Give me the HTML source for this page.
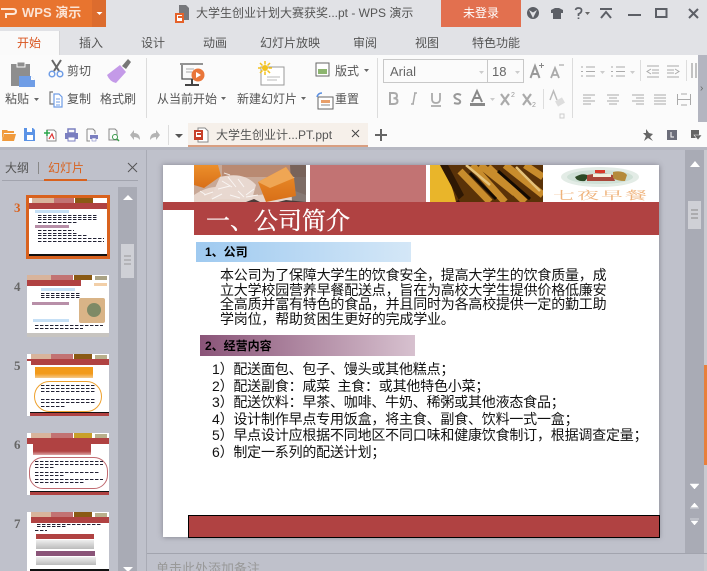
<!DOCTYPE html>
<html><head><meta charset="utf-8">
<style>
html,body{margin:0;padding:0}
html{width:707px;height:571px;overflow:hidden}
body{width:707px;height:571px;overflow:hidden;position:relative;background:#bfc1cb;font-family:"Liberation Sans","Noto Sans CJK SC",sans-serif;color:#555}
.a{position:absolute}
.t{position:absolute;white-space:nowrap;font-size:12px;line-height:16px;color:#555}
svg{position:absolute;overflow:visible}
.s{font-family:"Liberation Sans","WenQuanYi Zen Hei","Noto Sans CJK SC",sans-serif;color:#111;white-space:nowrap;position:absolute;font-size:14px;line-height:15px}
.th{position:absolute;left:27px;width:82px;height:62px;background:#fff;overflow:hidden}
.th div{position:absolute}
.n{position:absolute;left:14px;font:bold 13px "Liberation Serif",serif;color:#666}
.b{height:1px;background:repeating-linear-gradient(90deg,#223 0 3px,#99a 3px 4px,#fff 4px 5px)}
</style></head><body>
<!-- top -->
<div class="a" style="left:0;top:0;width:707px;height:55px;background:#e1e2e6"></div>
<div class="a" style="left:0;top:0;width:92px;height:27px;background:#e8742f"></div>
<div class="a" style="left:92px;top:0;width:14px;height:27px;background:#dc6c2e"></div>
<svg style="left:0;top:0" width="106" height="27"><path d="M1 9H13Q16 9 16 11.500Q16 14 13 14H6V18" fill="none" stroke="#fde8da" stroke-width="2"/><path d="M96.500 12h6l-3 3z" fill="#fff"/></svg>
<div class="t" style="left:22px;top:5px;color:#fbe3d4;font-size:13px;font-weight:bold">WPS 演示</div>
<svg style="left:175px;top:5px" width="16" height="18"><path d="M4 0h7l3 3v12H4z" fill="#77787c"/><rect x="0" y="8" width="9" height="10" fill="#e5622a"/><rect x="2" y="10" width="5" height="6" fill="#fff"/><rect x="3" y="11" width="4" height="2" fill="#e5622a"/></svg>
<div class="t" style="left:196px;top:5px;font-size:12px;color:#555;line-height:17px">大学生创业计划大赛获奖...pt - WPS 演示</div>
<div class="a" style="left:441px;top:0;width:80px;height:27px;background:#e2704f"></div>
<div class="t" style="left:463px;top:5px;color:#fff">未登录</div>
<svg style="left:0;top:0" width="707" height="27">
<circle cx="533" cy="13" r="6" fill="#5c5f66"/><path d="M529 10l4 2.500 4-2.500-4 8z" fill="#e1e2e6"/>
<path d="M551 10l4-2h4l4 2v3h-2v6h-8v-6h-2z" fill="#5c5f66"/>
<path d="M575.500 10Q576 8 578.500 8Q582 8 581.500 11Q581 13 578.500 14V16M578.500 17.500v1.500" fill="none" stroke="#5c5f66" stroke-width="1.700"/><path d="M585 12h5l-2.500 3z" fill="#666"/>
<path d="M600 9h12M601 18l5-6 5 6" fill="none" stroke="#5c5f66" stroke-width="2"/>
<rect x="628" y="14" width="13" height="2" fill="#5c5f66"/>
<rect x="656" y="9" width="10.500" height="8" fill="none" stroke="#5c5f66" stroke-width="2"/>
<path d="M689 9l9 9M698 9l-9 9" stroke="#5c5f66" stroke-width="2"/></svg>
<!-- tabs -->
<div class="a" style="left:0;top:31px;width:60px;height:24px;background:#fafafa;border-right:1px solid #d6d6d8;box-sizing:border-box"></div>
<div class="t" style="left:17px;top:35px;color:#d9541e">开始</div>
<div class="t" style="left:79px;top:35px">插入</div>
<div class="t" style="left:141px;top:35px">设计</div>
<div class="t" style="left:203px;top:35px">动画</div>
<div class="t" style="left:260px;top:35px">幻灯片放映</div>
<div class="t" style="left:353px;top:35px">审阅</div>
<div class="t" style="left:415px;top:35px">视图</div>
<div class="t" style="left:472px;top:35px">特色功能</div>
<!-- ribbon -->
<div class="a" style="left:0;top:55px;width:707px;height:92px;background:#fbfbfb"></div>
<div class="a" style="left:698px;top:55px;width:9px;height:67px;background:#b3b5c0"></div>
<div class="t" style="left:700px;top:81px;font-size:10px;color:#666">›</div>
<div class="a" style="left:146px;top:58px;width:1px;height:60px;background:#dcdcdc"></div>
<div class="a" style="left:377px;top:58px;width:1px;height:60px;background:#dcdcdc"></div>
<div class="a" style="left:572px;top:58px;width:1px;height:60px;background:#dcdcdc"></div>
<svg style="left:0;top:55px" width="180" height="67">
<rect x="11" y="9" width="19" height="22" fill="#8e8e8e"/><rect x="17" y="7" width="8" height="5" fill="#8e8e8e" stroke="#fbfbfb"/><path d="M19 21h12l4 4v7H19z" fill="#6f9de6"/><path d="M31 21v4h4z" fill="#fff"/>
<path d="M52 5l7 11M61 5l-7 11" stroke="#666" stroke-width="2"/><circle cx="52" cy="19" r="2.800" fill="none" stroke="#6f9de6" stroke-width="1.500"/><circle cx="60" cy="19" r="2.800" fill="none" stroke="#6f9de6" stroke-width="1.500"/>
<path d="M122 11l6-7 3 3-5 7z" fill="#777"/><path d="M107 20l13-10 6 7-10 11q-6-1-9-8z" fill="#c49ae8"/>
<path d="M53 37h-3v12h4" fill="none" stroke="#777" stroke-width="1.200"/><path d="M54 39h5l3 3v10h-8z" fill="#fff" stroke="#6f9de6" stroke-width="1.200"/><path d="M56 44h4M56 47h4M56 50h4" stroke="#6f9de6"/>
<path d="M34 43h5l-2.500 3z" fill="#666"/></svg>
<div class="t" style="left:67px;top:63px">剪切</div>
<div class="t" style="left:5px;top:91px">粘贴</div>
<div class="t" style="left:67px;top:91px">复制</div>
<div class="t" style="left:100px;top:91px">格式刷</div>
<svg style="left:175px;top:55px" width="200" height="67">
<path d="M5 9h23M7 10v14h19" fill="none" stroke="#555" stroke-width="1.300"/><path d="M11 14h8M11 17h6" stroke="#aaa"/><path d="M17 24v5M10 30h14" stroke="#444" stroke-width="2"/><circle cx="23" cy="20" r="6.500" fill="#e9763a"/><path d="M21 17l5 3-5 3z" fill="#fff"/>
<path d="M86 12h23v18H86z" fill="#fff" stroke="#999"/><path d="M92 22h13M92 25h10" stroke="#bbb"/>
<circle cx="90" cy="13" r="3" fill="#f3c21e"/><path d="M90 6v3.500M90 16.500v3.500M83 13h3.500M93.500 13h3.500M85 8l2.500 2.500M92.500 15.500l2.500 2.500M95 8l-2.500 2.500M87.500 15.500l-2.500 2.500" stroke="#f3c21e" stroke-width="1.500"/>
<rect x="141" y="8" width="13" height="13" fill="#fff" stroke="#666"/><rect x="143" y="14" width="9" height="5" fill="#8cb56f"/>
<path d="M143 42h15v12h-15z" fill="#fff" stroke="#666"/><rect x="146" y="45" width="9" height="3" fill="#e9a06a"/><path d="M146 50h9" stroke="#888"/><path d="M147 38q-4 0-5 4" fill="none" stroke="#5b8fe0" stroke-width="1.500"/>
</svg>
<div class="t" style="left:157px;top:91px">从当前开始</div><svg style="left:221px;top:97px" width="6" height="4"><path d="M0 0h5l-2.500 3z" fill="#666"/></svg>
<div class="t" style="left:237px;top:91px">新建幻灯片</div><svg style="left:301px;top:97px" width="6" height="4"><path d="M0 0h5l-2.500 3z" fill="#666"/></svg>
<div class="t" style="left:335px;top:63px">版式</div><svg style="left:364px;top:69px" width="6" height="4"><path d="M0 0h5l-2.500 3z" fill="#666"/></svg>
<div class="t" style="left:335px;top:91px">重置</div>
<!-- font -->
<div class="a" style="left:383px;top:59px;width:141px;height:24px;border:1px solid #c8c8c8;box-sizing:border-box"></div>
<div class="a" style="left:487px;top:59px;width:1px;height:24px;background:#c8c8c8"></div>
<div class="t" style="left:390px;top:64px;color:#666;font-size:13px">Arial</div>
<div class="t" style="left:492px;top:64px;color:#666;font-size:13px">18</div>
<svg style="left:0;top:0" width="707" height="122">
<path d="M479 71h5l-2.500 3zM515 71h5l-2.500 3z" fill="#ccc"/>
<path d="M530.500 78l4.500-12 4.500 12M532.500 74h5" fill="none" stroke="#999" stroke-width="2"/><path d="M539 65.500h5M541.500 63v5" stroke="#888"/>
<path d="M551 78l4-10 4 10M552.500 75h5" fill="none" stroke="#aaa" stroke-width="1.800"/><path d="M559 65h5" stroke="#999"/>
<g fill="none" stroke="#aaa">
<path d="M586 67h9M586 71.500h9M586 76h9M581 67h2M581 71.500h2M581 76h2"/>
<path d="M616 67h9M616 71.500h9M616 76h9M611 67h2M611 71.500h2M611 76h2"/>
<path d="M647 66h12M652 70h7M652 73h7M647 77h12M651 69l-4 2.500 4 2.500"/>
<path d="M667 66h12M667 70h7M667 73h7M667 77h12M675 69l4 2.500-4 2.500"/>
<path d="M583 95h12M583 98h8M583 101h12M583 104h8"/>
<path d="M607 95h12M609 98h8M607 101h12M609 104h8"/>
<path d="M632 95h12M636 98h8M632 101h12M636 104h8"/>
<path d="M654 95h12M654 98h12M654 101h12M654 104h12"/>
<path d="M677.500 94v11M690.500 94v11M678 99.500h12M681 94h6M681 105h6"/>
</g>
<path d="M600 71h5l-2.500 3zM630 71h5l-2.500 3zM490 98h5l-2.500 3z" fill="#ccc"/>
<path d="M692 63v15M696 63v15" stroke="#888"/>
<rect x="640" y="60" width="1" height="21" fill="#ddd"/><rect x="686" y="60" width="1" height="21" fill="#ddd"/><rect x="543" y="89" width="1" height="20" fill="#ddd"/>
<path d="M390 104V93h3.500q3.500 0 3.500 2.700t-3.500 2.500q4 0 4 2.900t-4 2.900z" fill="none" stroke="#aaa" stroke-width="2"/>
<path d="M414 93h3M411 104h3M415 93l-2 11" stroke="#aaa" stroke-width="1.500"/>
<path d="M432 93v6q0 4 4 4t4-4v-6M431 106h10" fill="none" stroke="#aaa" stroke-width="1.800"/>
<path d="M461 95q-4-2-6 0t2 4q4 1.500 3 3.500t-6 0.500" fill="none" stroke="#999" stroke-width="2"/>
<path d="M472 102l5-11 5 11M474 98h6" fill="none" stroke="#888" stroke-width="2"/><rect x="470" y="103" width="15" height="3" fill="#888"/>
<path d="M501 94l8 11M509 94l-8 11" stroke="#aaa" stroke-width="2.200"/><text x="511" y="97" font-size="7" font-family="Liberation Sans" fill="#999">2</text>
<path d="M523 94l8 11M531 94l-8 11" stroke="#aaa" stroke-width="2.200"/><text x="532" y="107" font-size="7" font-family="Liberation Sans" fill="#999">2</text>
<path d="M550 100l3.500-9 3.500 9" fill="none" stroke="#bbb" stroke-width="1.500"/><rect x="556" y="99" width="8" height="6" transform="rotate(-30 560 102)" fill="#ddd"/>
<rect x="560" y="114" width="4" height="4" fill="none" stroke="#ccc"/></svg>
<!-- quickbar -->
<svg style="left:0;top:122px" width="190" height="25">
<path d="M2 8h5l1 1h6v2H4l-2 7zM4 12h12l-2 7H2z" fill="#f09a3c"/>
<path d="M24 6h9l2 2v11H24z" fill="#5b93e6"/><rect x="27" y="6" width="5" height="4" fill="#fff"/><rect x="27" y="13" width="6" height="5" fill="#fff"/>
<path d="M47 8h7l2 2v9H47z" fill="#fff" stroke="#888"/><path d="M44 11h6M47 8v6" stroke="#2aa54a" stroke-width="1.500"/><path d="M49 17l3-5 2 5" fill="none" stroke="#d33" stroke-width="1.200"/>
<rect x="65" y="11" width="13" height="6" fill="#7b7fc0"/><rect x="68" y="7" width="7" height="4" fill="none" stroke="#7b7fc0" stroke-width="1.500"/><rect x="68" y="15" width="7" height="4" fill="#fff" stroke="#7b7fc0"/>
<path d="M87 7h6l2 2v3M87 7v12h3" fill="none" stroke="#888"/><rect x="90" y="13" width="8" height="4" fill="#7b7fc0"/><rect x="92" y="16" width="4" height="3" fill="#fff" stroke="#7b7fc0" stroke-width=".6"/>
<path d="M109 7h6l2 2v9h-8z" fill="none" stroke="#888"/><circle cx="115" cy="15" r="2.500" fill="#fff" stroke="#3a9a4a"/><path d="M117 17l2 2" stroke="#3a9a4a" stroke-width="1.500"/>
<path d="M130 13l4-5v3q6 0 6 7q-2-3-6-3v3z" fill="#b3b3b3"/><path d="M160 13l-4-5v3q-6 0-6 7q2-3 6-3v3z" fill="#b3b3b3"/>
<rect x="168" y="3" width="1" height="20" fill="#ddd"/><path d="M175 12h8l-4 4z" fill="#555"/></svg>
<div class="a" style="left:188px;top:123px;width:180px;height:24px;background:#f6f0ea;border-bottom:2px solid #d99f81;box-sizing:border-box"></div>
<svg style="left:194px;top:127px" width="16" height="16"><path d="M4 1h7l3 3v11H4z" fill="#fff" stroke="#888"/><rect x="0" y="3" width="9" height="10" fill="#c8402a"/><rect x="2" y="5" width="5" height="5" fill="#fff"/><rect x="3" y="6" width="4" height="2" fill="#c8402a"/></svg>
<div class="t" style="left:216px;top:127px;font-size:12px;line-height:17px">大学生创业计...PT.ppt</div>
<svg style="left:352px;top:130px" width="8" height="8"><path d="M0 0l7 7M7 0l-7 7" stroke="#444"/></svg>
<svg style="left:375px;top:129px" width="12" height="12"><path d="M6 0v12M0 6h12" stroke="#666" stroke-width="2"/></svg>
<svg style="left:640px;top:126px" width="62" height="18"><path d="M6 3l3 4 4 1-3 3 3 4-5-3-4 3 2-5-3-3h3z" fill="#666"/><rect x="27" y="4" width="10" height="10" fill="#6c6e7a"/><path d="M31 6v5h3" stroke="#fff" fill="none"/><rect x="51" y="4" width="8" height="8" fill="#666"/><path d="M54 9h8l-4 5z" fill="#666" stroke="#fbfbfb" stroke-width=".6"/></svg>
<div class="a" style="left:0;top:147px;width:707px;height:3px;background:#b6b8c2"></div>
<!-- left panel -->
<div class="a" style="left:146px;top:150px;width:1px;height:421px;background:#a9abb5"></div>
<div class="t" style="left:5px;top:160px;color:#555">大纲</div>
<div class="a" style="left:38px;top:162px;width:1px;height:12px;background:#888"></div>
<div class="t" style="left:48px;top:160px;color:#d9621e">幻灯片</div>
<svg style="left:128px;top:163px" width="10" height="10"><path d="M0 0l9 9M9 0l-9 9" stroke="#555"/></svg>
<div class="a" style="left:2px;top:180px;width:136px;height:1px;background:#a2a4ae"></div>
<div class="a" style="left:44px;top:179px;width:43px;height:2px;background:#d9621e"></div>
<div class="a" style="left:118px;top:187px;width:19px;height:384px;background:#a9abb5"></div>
<svg style="left:122px;top:194px" width="12" height="8"><path d="M1 6h10L6 1z" fill="#fff"/></svg>
<div class="a" style="left:121px;top:244px;width:13px;height:34px;background:#cfd0d6"></div>
<svg style="left:124px;top:255px" width="7" height="12"><path d="M0 1h7M0 5h7M0 9h7" stroke="#999"/></svg>
<svg style="left:122px;top:567px" width="12" height="4"><path d="M1 0h10L6 5z" fill="#fff"/></svg>
<div class="n" style="top:200px;color:#d9621e">3</div>
<div class="n" style="top:279px">4</div>
<div class="n" style="top:358px">5</div>
<div class="n" style="top:437px">6</div>
<div class="n" style="top:516px">7</div>
<!-- thumb 3 -->
<div class="th" style="left:26px;top:195px;width:78px;height:58px;border:3px solid #d9621e;border-bottom-width:3px">
<div style="left:3px;top:0;width:22px;height:5px;background:#d8b49c"></div><div style="left:25px;top:0;width:20px;height:5px;background:#c27373"></div><div style="left:46px;top:0;width:18px;height:5px;background:#8a5a14"></div>
<div style="left:0;top:5px;width:78px;height:6px;background:#b04242"></div>
<div style="left:6px;top:12px;width:34px;height:3px;background:#c6e0f6"></div>
<div class="b" style="left:9px;top:17px;width:60px"></div><div class="b" style="left:9px;top:19px;width:60px"></div><div class="b" style="left:9px;top:21px;width:60px"></div><div class="b" style="left:9px;top:24px;width:40px"></div>
<div style="left:6px;top:27px;width:34px;height:3px;background:#b88fa8"></div>
<div class="b" style="left:9px;top:32px;width:36px"></div><div class="b" style="left:9px;top:35px;width:40px"></div><div class="b" style="left:9px;top:37px;width:50px"></div><div class="b" style="left:9px;top:40px;width:66px"></div><div class="b" style="left:9px;top:43px;width:66px"></div>
<div style="left:0;top:56px;width:78px;height:2px;background:#111"></div></div>
<!-- thumb 4 -->
<div class="th" style="top:275px">
<div style="left:0;top:0;width:24px;height:5px;background:#d8b49c"></div><div style="left:24px;top:0;width:22px;height:5px;background:#c27373"></div><div style="left:47px;top:0;width:18px;height:5px;background:#8a5a14"></div><div style="left:68px;top:1px;width:12px;height:4px;background:#a9a284"></div>
<div style="left:0;top:5px;width:54px;height:6px;background:#b04242"></div><div style="left:67px;top:8px;width:13px;height:3px;background:#f2cfa8"></div>
<div style="left:14px;top:13px;width:34px;height:3px;background:#c6e0f6"></div><div class="b" style="left:14px;top:18px;width:40px"></div><div class="b" style="left:14px;top:20px;width:40px"></div><div class="b" style="left:14px;top:22px;width:40px"></div>
<div style="left:5px;top:27px;width:37px;height:3px;background:#b88fa8"></div>
<div style="left:52px;top:23px;width:26px;height:25px;background:#d9b487;border-radius:2px"></div><div style="left:60px;top:28px;width:14px;height:14px;background:#7e8a66;border-radius:50%"></div>
<div style="left:6px;top:44px;width:36px;height:3px;background:#c6e0f6"></div><div class="b" style="left:8px;top:50px;width:68px"></div><div class="b" style="left:8px;top:53px;width:48px"></div>
<div style="left:0;top:58px;width:82px;height:4px;background:#c7c4c0"></div></div>
<!-- thumb 5 -->
<div class="th" style="top:354px">
<div style="left:4px;top:0;width:20px;height:5px;background:#d8b49c"></div><div style="left:24px;top:0;width:22px;height:5px;background:#c27373"></div><div style="left:47px;top:0;width:18px;height:5px;background:#8a5a14"></div><div style="left:68px;top:1px;width:12px;height:5px;background:#b9b08c"></div>
<div style="left:4px;top:5px;width:78px;height:6px;background:#b04242"></div><div style="left:0;top:5px;width:30px;height:2px;background:#b04242"></div>
<div style="left:8px;top:13px;width:58px;height:11px;background:linear-gradient(#f29a1a 60%,#f5c98a)"></div>
<div style="left:7px;top:27px;width:68px;height:31px;border:1px solid #eea12e;border-radius:16px;box-sizing:border-box"></div>
<div class="b" style="left:14px;top:31px;width:54px"></div><div class="b" style="left:14px;top:34px;width:54px"></div><div class="b" style="left:14px;top:37px;width:54px"></div><div class="b" style="left:14px;top:45px;width:54px"></div><div class="b" style="left:14px;top:48px;width:54px"></div><div class="b" style="left:14px;top:52px;width:24px"></div>
<div style="left:3px;top:58px;width:79px;height:4px;background:#b04242;border-top:1px solid #111;box-sizing:border-box"></div></div>
<!-- thumb 6 -->
<div class="th" style="top:433px">
<div style="left:4px;top:0;width:20px;height:5px;background:#d8b49c"></div><div style="left:24px;top:0;width:22px;height:5px;background:#c27373"></div><div style="left:47px;top:0;width:18px;height:5px;background:#c9a02a"></div><div style="left:68px;top:1px;width:12px;height:5px;background:#b9b08c"></div>
<div style="left:0;top:5px;width:82px;height:6px;background:#b04242"></div>
<div style="left:6px;top:11px;width:58px;height:11px;background:linear-gradient(#b04242 65%,#dea4a4)"></div>
<div style="left:2px;top:24px;width:79px;height:32px;border:1px solid #c06a70;border-radius:14px;box-sizing:border-box"></div>
<div class="b" style="left:8px;top:28px;width:68px"></div><div class="b" style="left:8px;top:31px;width:68px"></div><div class="b" style="left:8px;top:34px;width:20px"></div><div class="b" style="left:8px;top:39px;width:64px"></div><div class="b" style="left:8px;top:42px;width:30px"></div><div class="b" style="left:8px;top:46px;width:68px"></div><div class="b" style="left:8px;top:49px;width:50px"></div>
<div style="left:3px;top:58px;width:79px;height:4px;background:#b04242;border-top:1px solid #111;box-sizing:border-box"></div></div>
<!-- thumb 7 -->
<div class="th" style="top:512px;height:59px">
<div style="left:4px;top:0;width:20px;height:5px;background:#d8b49c"></div><div style="left:24px;top:0;width:22px;height:5px;background:#c27373"></div><div style="left:47px;top:0;width:18px;height:5px;background:#8a5a14"></div><div style="left:68px;top:1px;width:12px;height:5px;background:#b9b08c"></div>
<div style="left:4px;top:5px;width:78px;height:6px;background:#b04242"></div>
<div class="b" style="left:10px;top:12px;width:64px"></div><div class="b" style="left:10px;top:14px;width:30px"></div><div class="b" style="left:8px;top:18px;width:12px"></div>
<div style="left:9px;top:22px;width:58px;height:5px;background:#b04242"></div><div style="left:9px;top:28px;width:58px;height:9px;background:linear-gradient(#eee,#bbb)"></div>
<div style="left:9px;top:39px;width:59px;height:5px;background:#8a5478"></div><div style="left:9px;top:45px;width:60px;height:8px;background:linear-gradient(#eee,#bbb)"></div>
<div style="left:3px;top:57px;width:79px;height:2px;background:#111"></div></div>
<!-- right scrollbar -->
<div class="a" style="left:685px;top:150px;width:19px;height:403px;background:#a9abb5"></div>
<div class="a" style="left:704px;top:150px;width:3px;height:421px;background:#c9cad0"></div>
<div class="a" style="left:704px;top:365px;width:3px;height:100px;background:#e8803c"></div>
<div class="a" style="left:688px;top:201px;width:13px;height:28px;background:#cfd0d6"></div>
<svg style="left:691px;top:209px" width="7" height="12"><path d="M0 1h7M0 5h7M0 9h7" stroke="#888"/></svg>
<svg style="left:689px;top:160px" width="12" height="8"><path d="M1 7h10L6 1z" fill="#fff"/></svg>
<svg style="left:689px;top:483px" width="12" height="48"><path d="M1 1h9L5.500 6zM2 24l3.500-4 3.500 4zM1 25h9M1 36h9M2 38h7L5.500 42z" fill="#fff" stroke="#fff" stroke-width=".5"/></svg>
<!-- slide -->
<div class="a" style="left:163px;top:165px;width:496px;height:372px;background:#fff;box-shadow:-1px -1px 5px rgba(120,120,130,.45),1px 1px 4px rgba(120,120,130,.5)"></div>
<svg style="left:194px;top:165px;overflow:hidden" width="112" height="37">
<defs><linearGradient id="o" x1="0" y1="0" x2="0" y2="1"><stop offset="0" stop-color="#ec8f2a"/><stop offset="1" stop-color="#d86f18"/></linearGradient></defs>
<rect width="112" height="37" fill="#c8a896"/><rect x="28" width="84" height="12" fill="#b98a72"/>
<path d="M0 30Q20 16 42 26T90 22L112 30V37H0z" fill="#e6d4ca"/><path d="M26 12Q50 6 62 20L58 34H16z" fill="#e8d8d0"/><path d="M96 0L112 0V37H98z" fill="#5d5250" opacity=".7"/>
<g stroke="#fff" stroke-width="1" fill="none" opacity=".75"><path d="M28 16l10 6M34 12l8 10M24 24l12-3M44 14l6 8M10 30l9-3M18 34l10-5M36 30l10 3M44 26l6 6M52 32l12-2M60 24l-8 6M86 20l6-10M100 12l-6 14M30 8l6 2M6 26l6 4"/></g>
<path d="M0 0H24L27 11 10 23 0 20z" fill="url(#o)"/><path d="M64 17L92 2 100 13 102 31 72 37z" fill="url(#o)"/><path d="M64 17L92 2 100 13 76 23z" fill="#efa654"/>
<path d="M52 37l8-3 6 3zM84 37l8-2 20 2z" fill="#4a3a38"/>
</svg>
<div class="a" style="left:310px;top:165px;width:116px;height:37px;background:#c27373"></div>
<svg style="left:430px;top:165px;overflow:hidden" width="113" height="37">
<rect width="113" height="37" fill="#5a3208"/><path d="M0 0H12Q22 18 26 37H0z" fill="#e9b52a"/><path d="M18 0L34 30 26 37 30 37 10 0z" fill="#2e1804"/>
<path d="M30 6L60 37M42 0L75 37M58 2L95 37M75 0L113 30M95 0L113 12M50 0L85 28" stroke="#c88c2c" stroke-width="7"/><path d="M40 8L66 34M68 6L100 34" stroke="#120a02" stroke-width="3"/><path d="M36 0L60 20M86 2L110 26" stroke="#e5c27a" stroke-width="2.500"/>
</svg>
<svg style="left:556px;top:167px" width="100" height="36"><ellipse cx="44" cy="10" rx="39" ry="10" fill="#e3ece6"/><ellipse cx="44" cy="10" rx="33" ry="7" fill="#cfe0d6"/><path d="M19 10q8-5 14-1l-4 5q-8 1-10-4z" fill="#2c4a26"/><path d="M31 8q14-3 26 0l2 6H31z" fill="#a8483a"/><path d="M37 7h18v3H37z" fill="#f2f0dc"/><path d="M57 5q10-2 14 3l-2 6q-8 0-12-3z" fill="#b58a3a"/><path d="M39 3h10v3H39z" fill="#d83a2a"/></svg>
<div class="a" style="left:553px;top:184px;white-space:nowrap;font:22px/22px 'Noto Serif CJK SC',serif;letter-spacing:2px;color:#efb27a;transform:scaleY(.5);transform-origin:0 50%">七夜早餐</div>
<div class="a" style="left:163px;top:202px;width:31px;height:8px;background:#b04242"></div>
<div class="a" style="left:194px;top:202px;width:465px;height:33px;background:#b04242"></div>
<div class="a" style="left:206px;top:205px;white-space:nowrap;font:24px/28px 'Noto Serif CJK SC',serif;color:#fff;-webkit-text-stroke:.3px #fff">一、公司简介</div>
<div class="a" style="left:196px;top:242px;width:215px;height:20px;background:linear-gradient(90deg,#9fcaf0,#d4e7f7)"></div>
<div class="s" style="left:205px;top:245px;font-size:12px;font-weight:bold;color:#000">1、公司</div>
<div class="s" style="left:220px;top:268px;letter-spacing:-.2px">本公司为了保障大学生的饮食安全，提高大学生的饮食质量，成</div>
<div class="s" style="left:220px;top:283px;letter-spacing:-.2px">立大学校园营养早餐配送点，旨在为高校大学生提供价格低廉安</div>
<div class="s" style="left:220px;top:297px;letter-spacing:-.2px">全高质并富有特色的食品，并且同时为各高校提供一定的勤工助</div>
<div class="s" style="left:220px;top:312px;letter-spacing:-.2px">学岗位，帮助贫困生更好的完成学业。</div>
<div class="a" style="left:200px;top:335px;width:215px;height:21px;background:linear-gradient(90deg,#8a5478,#d7c1cf)"></div>
<div class="s" style="left:205px;top:339px;font-size:12px;font-weight:bold;color:#000">2、经营内容</div>
<div class="s" style="left:212px;top:362px;letter-spacing:-.2px">1）配送面包、包子、馒头或其他糕点；</div>
<div class="s" style="left:212px;top:379px;letter-spacing:-.2px">2）配送副食：咸菜&nbsp;&nbsp;主食：或其他特色小菜；</div>
<div class="s" style="left:212px;top:395px;letter-spacing:-.2px">3）配送饮料：早茶、咖啡、牛奶、稀粥或其他液态食品；</div>
<div class="s" style="left:212px;top:412px;letter-spacing:-.2px">4）设计制作早点专用饭盒，将主食、副食、饮料一式一盒；</div>
<div class="s" style="left:212px;top:428px;letter-spacing:-.2px">5）早点设计应根据不同地区不同口味和健康饮食制订，根据调查定量；</div>
<div class="s" style="left:212px;top:445px;letter-spacing:-.2px">6）制定一系列的配送计划；</div>
<div class="a" style="left:188px;top:515px;width:472px;height:23px;background:#b04242;border:1px solid #000;box-sizing:border-box"></div>
<!-- notes -->
<div class="a" style="left:147px;top:553px;width:560px;height:1px;background:#a2a4ae"></div>
<div class="t" style="left:156px;top:561px;font-size:13px;line-height:16px;color:#999">单击此处添加备注</div>
</body></html>
